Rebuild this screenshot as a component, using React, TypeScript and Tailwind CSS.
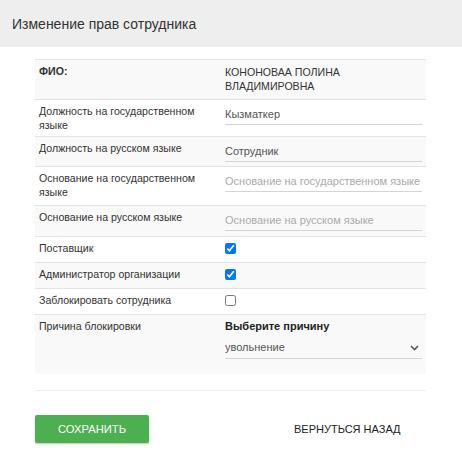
import * as React from "react";

const font = { fontFamily: '"Liberation Sans", Arial, sans-serif' };

function TextField({ value, placeholder }: { value?: string; placeholder?: string }) {
  return (
    <input
      type="text"
      defaultValue={value}
      placeholder={placeholder}
      className="w-full h-[22px] bg-transparent border-b border-[#d4d4d4] text-[11px] text-[#555] placeholder:text-[#aaa] outline-none"
    />
  );
}

function Check({ checked }: { checked?: boolean }) {
  return (
    <input
      type="checkbox"
      defaultChecked={checked}
      className="w-[11px] h-[11px] m-0 mt-[2px] accent-[#0075ff]"
    />
  );
}

export default function App() {
  return (
    <div className="min-h-screen bg-white text-[#333]" style={font}>
      <div className="h-[47px] bg-[#eeeeee] flex items-center px-[12px] pt-[2px]">
        <h1 className="text-[14px] text-[#333]">Изменение прав сотрудника</h1>
      </div>

      <div className="mx-[35px] mt-[12px] w-[391px]">
        <div className="border-t border-[#e6e6e6] text-[10.6px]">
          <div className="grid grid-cols-[186px_1fr] h-[39px] bg-[#f9f9f9]">
            <div className="pl-[4px] pt-[4px] font-bold leading-[14px]">ФИО:</div>
            <div className="px-[4px] pt-[5px] leading-[14px]">
              КОНОНОВАА ПОЛИНА
              <br />
              ВЛАДИМИРОВНА
            </div>
          </div>

          <div className="grid grid-cols-[186px_1fr] h-[37px] border-t border-[#e3e3e3]">
            <div className="pl-[4px] pt-[4px] leading-[14px]">
              Должность на государственном языке
            </div>
            <div className="px-[4px] pt-[3px]">
              <TextField value="Кызматкер" />
            </div>
          </div>

          <div className="grid grid-cols-[186px_1fr] h-[30px] border-t border-[#e3e3e3] bg-[#f9f9f9]">
            <div className="pl-[4px] pt-[4px] leading-[14px]">Должность на русском языке</div>
            <div className="px-[4px] pt-[3px]">
              <TextField value="Сотрудник" />
            </div>
          </div>

          <div className="grid grid-cols-[186px_1fr] h-[39px] border-t border-[#e3e3e3]">
            <div className="pl-[4px] pt-[4px] leading-[14px]">
              Основание на государственном языке
            </div>
            <div className="px-[4px] pt-[3px]">
              <TextField placeholder="Основание на государственном языке" />
            </div>
          </div>

          <div className="grid grid-cols-[186px_1fr] h-[31px] border-t border-[#e3e3e3] bg-[#f9f9f9]">
            <div className="pl-[4px] pt-[4px] leading-[14px]">Основание на русском языке</div>
            <div className="px-[4px] pt-[3px]">
              <TextField placeholder="Основание на русском языке" />
            </div>
          </div>

          <div className="grid grid-cols-[186px_1fr] h-[26px] border-t border-[#e3e3e3]">
            <div className="pl-[4px] pt-[4px] leading-[14px]">Поставщик</div>
            <div className="px-[4px] pt-[4px]">
              <Check checked />
            </div>
          </div>

          <div className="grid grid-cols-[186px_1fr] h-[26px] border-t border-[#e3e3e3] bg-[#f9f9f9]">
            <div className="pl-[4px] pt-[4px] leading-[14px]">Администратор организации</div>
            <div className="px-[4px] pt-[4px]">
              <Check checked />
            </div>
          </div>

          <div className="grid grid-cols-[186px_1fr] h-[26px] border-t border-[#e3e3e3]">
            <div className="pl-[4px] pt-[4px] leading-[14px]">Заблокировать сотрудника</div>
            <div className="px-[4px] pt-[4px]">
              <Check />
            </div>
          </div>

          <div className="grid grid-cols-[186px_1fr] h-[60px] border-t border-[#e3e3e3] bg-[#f9f9f9]">
            <div className="pl-[4px] pt-[4px] leading-[14px]">Причина блокировки</div>
            <div className="px-[4px] pt-[4px]">
              <div className="text-[11px] font-bold text-[#222] leading-[14px]">Выберите причину</div>
              <div className="relative mt-[4px]">
                <select
                  defaultValue="dismissal"
                  className="w-full h-[22px] appearance-none bg-transparent border-b border-[#d4d4d4] text-[11px] text-[#555] outline-none"
                >
                  <option value="dismissal">увольнение</option>
                  <option value="vacation">отпуск</option>
                </select>
                <svg
                  className="absolute right-[3px] top-[8px] pointer-events-none"
                  width="9"
                  height="6"
                  viewBox="0 0 9 6"
                  fill="none"
                  stroke="#555"
                  strokeWidth="1.6"
                >
                  <path d="M1 1l3.5 3.5L8 1" />
                </svg>
              </div>
            </div>
          </div>
        </div>

        <div className="mt-[16px] border-t border-[#eeeeee]" />

        <div className="flex items-center mt-[24px]">
          <button className="w-[114px] h-[28px] rounded-[2px] bg-[#4caf50] text-white text-[11.2px] shadow-[0_1px_2px_rgba(0,0,0,0.25)]">
            СОХРАНИТЬ
          </button>
          <button className="ml-[129px] h-[28px] px-[16px] text-[11px] text-[#222]">
            ВЕРНУТЬСЯ НАЗАД
          </button>
        </div>
      </div>
    </div>
  );
}
